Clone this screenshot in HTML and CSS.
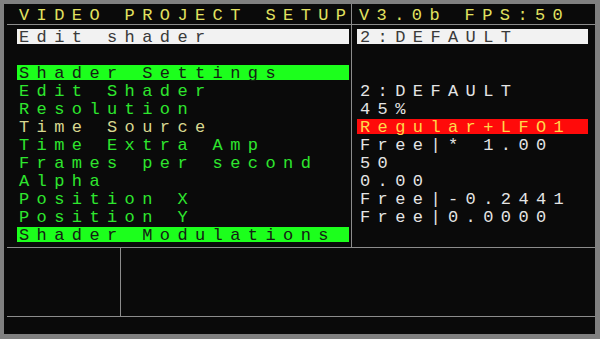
FILE: index.html
```html
<!DOCTYPE html>
<html lang="en">
  <head>
    <meta charset="UTF-8" />
    <meta name="viewport" content="width=device-width, initial-scale=1.0" />
    <title>Video Project Setup</title>
    <link rel="stylesheet" href="styles.css">
  </head>
  <body>
    <div class="screen">
      <div class="top">
        <!-- Menu column -->
        <div class="col col-left">
          <div class="head title">VIDEO PROJECT SETUP</div>
          <div class="rule"></div>
          <div class="rows">
            <div class="row sel-white">Edit shader</div>
            <div class="row"></div>
            <div class="row sel-green">Shader Settings</div>
            <div class="row">Edit Shader</div>
            <div class="row">Resolution</div>
            <div class="row active">Time Source</div>
            <div class="row">Time Extra Amp</div>
            <div class="row">Frames per second</div>
            <div class="row">Alpha</div>
            <div class="row">Position X</div>
            <div class="row">Position Y</div>
            <div class="row sel-green">Shader Modulations</div>
          </div>
        </div>

        <!-- Values column -->
        <div class="col col-right">
          <div class="head title">V3.0b FPS:50</div>
          <div class="rule"></div>
          <div class="rows">
            <div class="row sel-white">2:DEFAULT</div>
            <div class="row"></div>
            <div class="row"></div>
            <div class="row">2:DEFAULT</div>
            <div class="row">45%</div>
            <div class="row sel-red">Regular+LFO1</div>
            <div class="row">Free|* 1.00</div>
            <div class="row">50</div>
            <div class="row">0.00</div>
            <div class="row">Free|-0.2441</div>
            <div class="row">Free|0.0000</div>
            <div class="row"></div>
          </div>
        </div>
      </div>

      <div class="rule"></div>
      <div class="bottom">
        <div class="pane pane-small"></div>
        <div class="pane"></div>
      </div>
      <div class="rule"></div>
      <div class="status"></div>
    </div>
  </body>
</html>
```

FILE: styles.css
```css
/* Terminal style setup screen */
:root {
  --frame: #808080;
  --bg: #0a0a0a;
  --line: #8c8c8c;
  --yellow: #e2e260;
  --green: #2ee62e;
  --bar-green: #1cff1c;
  --khaki: #d8d890;
  --value: #e4e4e4;
  --red: #ff0a0a;
}

* {
  margin: 0;
  padding: 0;
  box-sizing: border-box;
}

body {
  background: var(--frame);
  font-family: "Liberation Mono", "DejaVu Sans Mono", monospace;
  font-size: 17px;
  letter-spacing: 7.4px;
}

.screen {
  width: 600px;
  height: 339px;
  border-style: solid;
  border-color: var(--frame);
  border-width: 4px 5px 5px 4px;
  background: var(--bg);
  display: flex;
  flex-direction: column;
}

.top {
  display: grid;
  grid-template-columns: 348px 1fr;
  height: 243px;
}

.col-left {
  border-right: 1px solid var(--line);
}

.head {
  height: 20px;
  line-height: 23px;
  white-space: pre;
}

.title {
  color: var(--yellow);
  padding-left: 15px;
}

.col-right .title {
  padding-left: 7px;
}

.rule {
  height: 1px;
  background: var(--line);
  margin-left: 3px;
}

.col-right .rule {
  margin-left: 0;
}

.rows {
  padding-top: 4px;
}

.row {
  height: 15px;
  line-height: 17px;
  margin-bottom: 3px;
  white-space: pre;
}

.col-left .row {
  color: var(--green);
  margin-left: 13px;
  margin-right: 2px;
  padding-left: 2px;
}

.col-left .row.active {
  color: var(--khaki);
}

.col-right .row {
  color: var(--value);
  margin-left: 5px;
  margin-right: 7px;
  padding-left: 3px;
}

.col-left .row.sel-white,
.col-right .row.sel-white {
  background: #f2f2f2;
  color: #3a3a3a;
}

.col-left .row.sel-green {
  background: var(--bar-green);
  color: #142014;
}

.col-right .row.sel-red {
  background: var(--red);
  color: #ffd84a;
}

.bottom {
  display: grid;
  grid-template-columns: 117px 1fr;
  height: 68px;
}

.pane-small {
  border-right: 1px solid var(--line);
}

.status {
  flex: 1;
}
```
